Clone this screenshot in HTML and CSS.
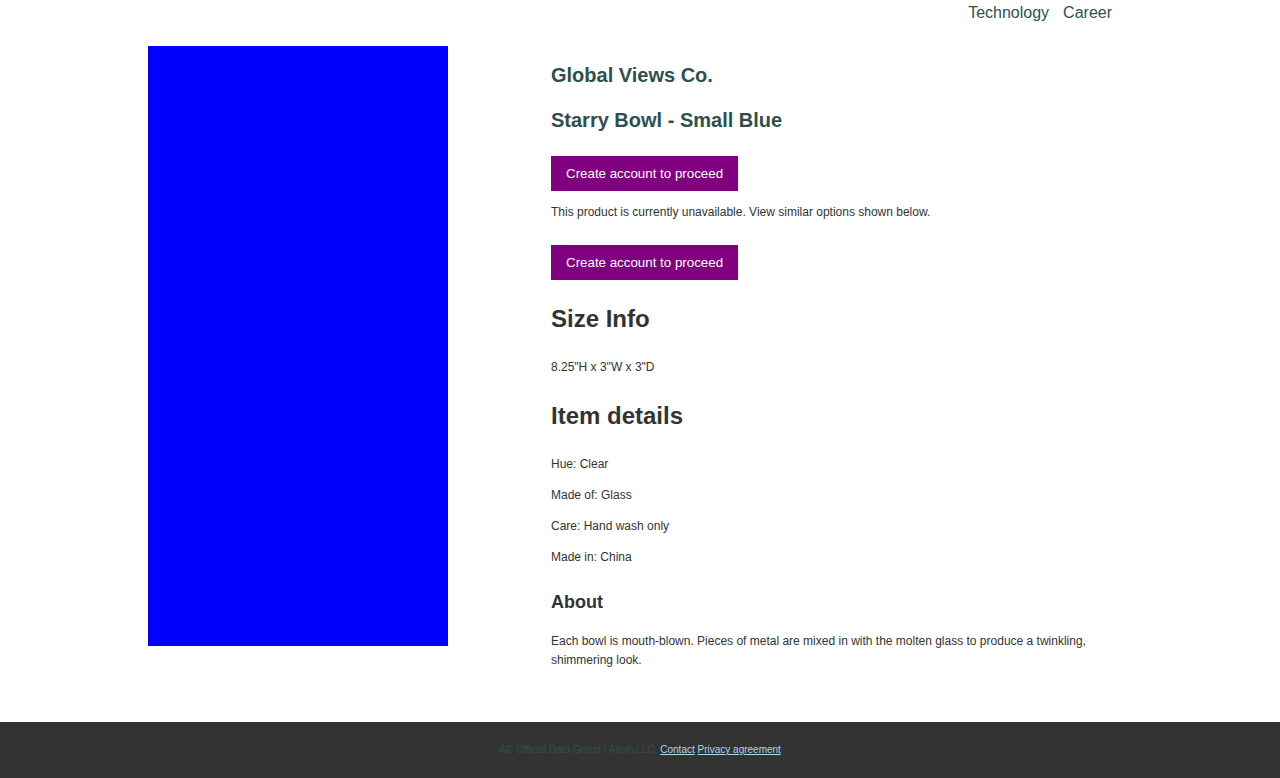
FILE: index.html
```html
<!DOCTYPE html>
<html lang="en">
<head>
<meta charset="utf-8">
<title>Starry Bowl - Small Blue</title>
<link rel="stylesheet" href="styles.css">
</head>
<body>
<nav class="nav">
<a href="#technology">Technology</a>
<a href="#career">Career</a>
</nav>
<main class="product">
<div class="photo"></div>
<div class="info">
<h2 class="brand">Global Views Co.</h2>
<h2 class="name">Starry Bowl - Small Blue</h2>
<button class="cta" type="button">Create account to proceed</button>
<p class="notice">This product is currently unavailable. View similar options shown below.</p>
<button class="cta" type="button">Create account to proceed</button>
<h1>Size Info</h1>
<p>8.25"H x 3"W x 3"D</p>
<h1>Item details</h1>
<p>Hue: Clear</p>
<p>Made of: Glass</p>
<p>Care: Hand wash only</p>
<p>Made in: China</p>
<h3>About</h3>
<p>Each bowl is mouth-blown. Pieces of metal are mixed in with the molten glass to produce a twinkling, shimmering look.</p>
</div>
</main>
<footer class="footer">
<p>Â© Official Data Group / Alioth LLC. <a href="#contact">Contact</a> <a href="#privacy">Privacy agreement</a></p>
</footer>
</body>
</html>
```
FILE: styles.css
```css
body {
  margin: 0;
  font-family: "Liberation Sans", Arial, sans-serif;
  font-size: 12px;
  line-height: 19px;
  color: #333;
  background: #fff;
}

.nav {
  display: flex;
  justify-content: flex-end;
  gap: 14px;
  padding: 0 168px 0 0;
  font-size: 16px;
  line-height: 26px;
}

.nav a {
  color: darkslategray;
  text-decoration: none;
}

.product {
  display: flex;
  align-items: flex-start;
  gap: 103px;
  padding: 20px 148px 40px;
}

.photo {
  flex: 0 0 300px;
  height: 600px;
  background: #00f;
}

.info {
  flex: 1;
  min-width: 0;
}

.info p {
  margin: 0 0 12px;
}

.info h1 {
  margin: 20px 0;
  font-size: 24px;
  line-height: 38px;
}

.info .brand,
.info .name {
  margin: 13px 0;
  color: darkslategray;
  font-size: 20px;
  line-height: 32px;
}

.info .name {
  margin-bottom: 20px;
}

.info h3 {
  margin: 20px 0 15px;
  font-size: 18px;
  line-height: 30px;
}

.cta {
  display: block;
  margin: 0 0 12px;
  padding: 10px 15px;
  border: 0;
  background: purple;
  color: #fff;
  font-family: inherit;
  line-height: 15px;
}

.info .notice {
  margin-bottom: 23px;
}

.footer {
  padding: 20px 0;
  background: #333;
  color: darkslategray;
  font-size: 10px;
  line-height: 16px;
  text-align: center;
}

.footer p {
  margin: 0;
}

.footer a {
  color: lightblue;
}
```
